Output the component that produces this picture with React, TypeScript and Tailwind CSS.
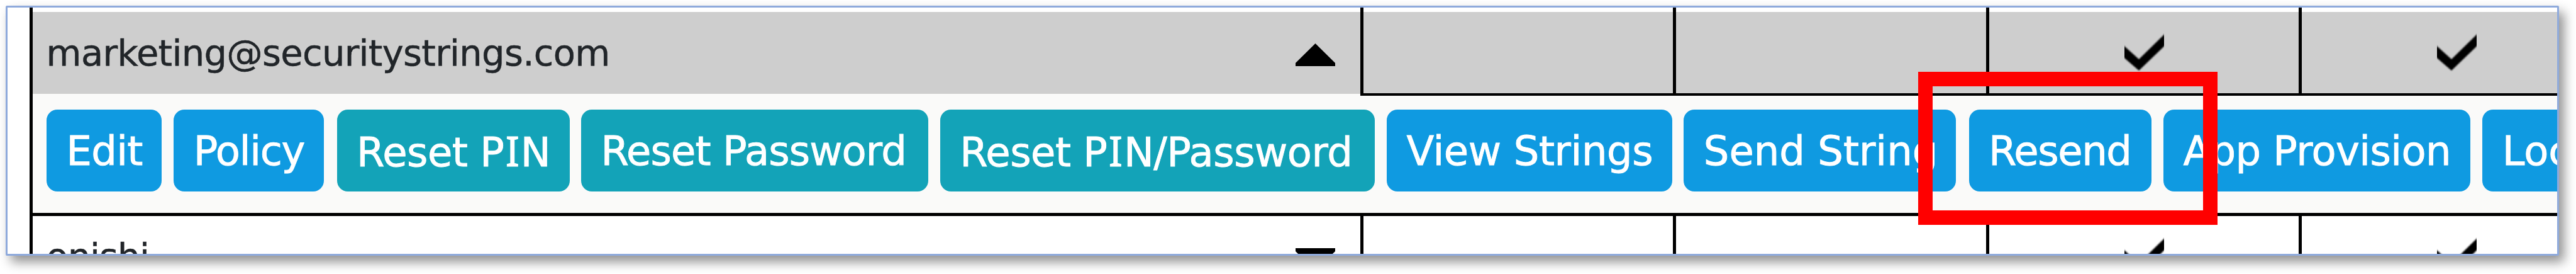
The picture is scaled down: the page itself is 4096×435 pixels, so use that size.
import type { ReactNode } from "react";

function SerifI() {
  return <span className="font-['Noto_Sans'] text-[65.5px] leading-none mx-[2.4px]">I</span>;
}

type Action = { id: string; label: ReactNode; className: string };

const actions: Action[] = [
  { id: "edit", label: "Edit", className: "w-[183px] bg-[#0f9ae1] tracking-[-0.7px]" },
  { id: "policy", label: "Policy", className: "w-[239px] bg-[#0f9ae1] tracking-[-1.3px]" },
  { id: "pin", label: <>Reset P<SerifI />N</>, className: "ml-[1px] w-[370px] bg-[#13a3b8] tracking-[-0.5px]" },
  { id: "password", label: "Reset Password", className: "-ml-[1px] w-[552px] bg-[#13a3b8] tracking-[-0.9px]" },
  { id: "both", label: <>Reset P<SerifI />N/Password</>, className: "-ml-[0.5px] w-[691px] bg-[#13a3b8] tracking-[-0.5px]" },
  { id: "view", label: "View Strings", className: "w-[454px] bg-[#0f9ae1] tracking-[-0.4px]" },
  { id: "send", label: "Send String", className: "-ml-[1px] w-[433px] bg-[#0f9ae1] tracking-[0px]" },
  { id: "resend", label: "Resend", className: "ml-[1px] w-[290px] bg-[#0f9ae1] tracking-[-1.4px]" },
  { id: "provision", label: "App Provision", className: "w-[488.5px] bg-[#0f9ae1] tracking-[-0.6px]" },
  { id: "lock", label: "Lock", className: "-ml-[0.5px] w-[230px] bg-[#0f9ae1]" },
];

function Check() {
  return (
    <svg width="63" height="62" viewBox="0 0 63 62" className="block overflow-hidden">
      <path d="M-6 15 L23 41 L70 -5 L70 14 L23 59 L-6 34 Z" fill="#000" className="blur-[1.2px]" />
    </svg>
  );
}

function Triangle({ down = false }: { down?: boolean }) {
  return (
    <svg width="63" height="36" viewBox="0 0 63 36" className={down ? "block rotate-180" : "block"}>
      <path d="M31.5 0 L63 31 V36 H0 V31 Z" fill="#000" />
    </svg>
  );
}

function Row({ name, open = false }: { name: string; open?: boolean }) {
  const cell = open
    ? "border-l-[5px] border-b-[4px] border-black bg-[#cecece]"
    : "border-l-[5px] border-black bg-white";
  return (
    <div className="flex h-[133px] shrink-0">
      <div
        className={
          open
            ? "flex h-[130px] w-[2111px] items-start justify-between bg-[#cecece] pl-[21.6px] pr-[40px]"
            : "flex h-[130px] w-[2111px] items-start justify-between bg-white pl-[21.6px] pr-[40px]"
        }
      >
        <span
          className={
            open
              ? "pt-[1px] text-[57.5px] leading-[130px] tracking-[-0.7px] text-[#212529] [-webkit-text-stroke:0.5px_#212529]"
              : "text-[57.5px] leading-[130px] tracking-[-1.1px] text-[#212529] [-webkit-text-stroke:0.5px_#212529]"
          }
        >
          {name}
        </span>
        <div className={open ? "pt-[50px]" : "pt-[51px]"}>
          <Triangle down={!open} />
        </div>
      </div>
      <div className={`w-[497px] ${cell}`} />
      <div className={`w-[498px] ${cell}`} />
      <div className={`w-[497px] pl-[215px] pt-[34px] ${cell}`}>
        <Check />
      </div>
      <div className={`w-[411px] pl-[215px] pt-[34px] ${cell}`}>
        <Check />
      </div>
    </div>
  );
}

export default function App() {
  return (
    <div className="relative h-[435px] w-[4096px] overflow-hidden bg-white pl-[9px] pt-[9px] font-['DejaVu_Sans',Verdana,sans-serif]">
      <div className="h-[397px] w-[4060px] rounded-[2px] border-[3px] border-[#8faadc] bg-white shadow-[8px_10px_18px_rgba(0,0,0,0.43)]">
        <div className="ml-[35px] flex h-[391px] flex-col overflow-hidden border-l-[5px] border-black bg-[#fafaf9]">
          <div className="flex h-[7px] shrink-0 bg-white">
            <div className="w-[2111px]" />
            <div className="w-[497px] border-l-[5px] border-black" />
            <div className="w-[498px] border-l-[5px] border-black" />
            <div className="w-[497px] border-l-[5px] border-black" />
            <div className="w-[411px] border-l-[5px] border-black" />
          </div>
          <Row name="marketing@securitystrings.com" open />
          <div className="flex h-[191px] shrink-0 gap-[19.3px] border-b-[5px] border-black bg-[#fafaf9] pl-[22px] pt-[22px]">
            {actions.map((a) => (
              <button
                key={a.id}
                className={`h-[129.5px] shrink-0 whitespace-nowrap rounded-[17px] pl-[31.5px] pt-[3px] text-left text-[64px] leading-none text-white [-webkit-text-stroke:0.9px_white] ${a.className}`}
              >
                {a.label}
              </button>
            ))}
          </div>
          <Row name="onishi" />
        </div>
      </div>
      <div className="absolute left-[3050px] top-[114px] h-[243px] w-[476px] border-[23px] border-[#ff0000]" />
    </div>
  );
}
